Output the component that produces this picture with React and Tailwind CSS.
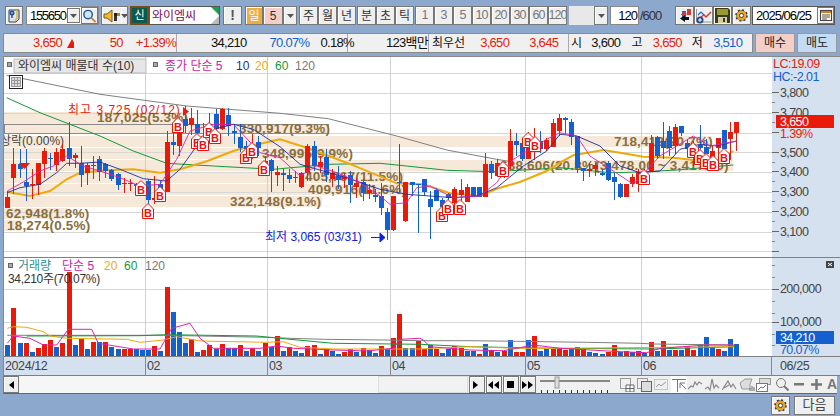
const RED = "#ea1a0a";
const BLUE = "#1560cf";
const BROWN = "#8a6e3c";

const barX = (i) => Math.round(7.3 + i * 6.126);

// [colour, high, bodyTop, bodyBottom, low], y values as read from 3x crops
const CANDLES = [
  ["r",405,423,455,455],["r",276,323,366,415],["b",280,323,340,366],["b",280,378,390,435],["r",340,384,388,430],
  ["r",320,321,387,415],["r",276,285,323,365],["b",290,306,310,340],["r",275,288,327,345],["r",265,279,315,320],
  ["b",198,276,308,330],["r",290,297,306,335],["b",270,322,357,392],["r",320,328,351,385],["b",300,326,330,370],
  ["b",300,310,347,375],["b",320,324,345,365],["b",340,342,370,375],["b",350,354,387,402],["r",365,381,385,410],
  ["r",368,381,385,405],["b",380,384,390,400],["b",380,384,390,400],["b",370,375,432,445],["r",360,427,431,445],
  ["b",375,385,420,425],["r",225,258,408,408],["b",205,258,266,298],["r",200,231,270,300],["b",150,190,210,230],
  ["r",155,186,206,235],["b",162,204,231,260],["r",200,240,270,285],["r",170,205,240,245],["b",160,174,218,240],
  ["r",155,158,220,222],["b",155,177,211,240],["b",205,225,232,265],["b",205,243,276,290],["b",255,270,280,300],
  ["r",235,270,300,310],["b",240,258,276,300],["r",300,315,345,350],["b",310,312,345,410],["r",330,348,358,390],
  ["b",340,352,358,405],["b",340,357,369,382],["r",345,362,367,380],["r",348,350,393,395],["r",265,270,350,375],
  ["b",255,270,330,345],["r",300,318,333,352],["b",280,303,357,380],["r",340,350,368,395],["b",330,360,372,400],
  ["r",350,362,370,395],["b",345,358,387,440],["r",365,380,393,425],["b",370,377,410,435],["r",385,403,412,430],
  ["b",400,418,424,440],["b",380,420,456,475],["b",455,468,521,550],["r",420,420,521,525],["b",265,378,382,410],
  ["r",378,378,495,497],["b",378,378,386,420],["b",385,383,388,532],["b",370,369,408,420],["b",405,429,453,548],
  ["b",395,403,434,435],["b",425,432,452,455],["b",410,415,425,430],["r",392,400,440,445],["r",370,402,417,445],
  ["r",385,393,437,440],["b",393,393,422,424],["b",393,393,422,424],["r",292,324,422,424],["b",315,324,350,370],
  ["r",310,322,360,365],["b",335,345,360,365],["r",220,255,330,340],["b",230,255,266,300],["b",250,262,308,315],
  ["r",228,240,308,310],["r",215,260,280,310],["b",225,255,280,290],["r",245,252,280,285],["r",190,202,273,275],
  ["r",175,187,226,240],["b",183,187,192,235],["b",188,198,243,265],["b",240,240,335,350],["b",335,335,345,375],
  ["r",320,340,345,362],["r",320,327,340,360],["b",340,350,356,362],["b",315,322,372,375],["b",350,363,378,430],
  ["b",380,384,422,424],["r",384,384,422,424],["r",355,363,384,395],["r",340,348,383,410],["b",340,350,375,385],
  ["r",238,260,345,350],["b",240,242,300,310],["b",198,255,275,310],["b",210,225,275,300],["r",205,213,270,295],
  ["b",210,210,230,240],["b",250,262,280,300],["r",255,265,300,330],["b",207,268,275,300],["b",250,272,295,320],
  ["r",270,285,310,330],["r",245,245,277,330],["b",222,222,280,300],["r",197,228,248,310],["r",197,198,230,285],
];

const VOL_Y = [285,174,279,279,306,294,282,270,291,279,65,285,267,297,276,276,276,291,297,297,297,297,300,300,288,303,111,186,246,279,267,306,300,285,297,282,294,294,285,303,294,303,279,291,258,303,291,303,309,288,285,312,297,303,312,306,297,306,294,300,309,288,297,264,192,294,294,273,297,285,297,309,297,288,294,303,303,312,282,300,306,303,270,306,306,270,258,303,297,297,294,300,297,291,297,306,309,312,306,285,306,303,306,303,309,276,303,273,300,300,300,288,300,282,261,291,297,303,267,282];
const VOL_C = "brbrbrrrbrrbrbrbrbbrrbbbrbrbbbrbrrbrbbrbrbrbrbrbbrrbrbbrrbrbbrbrrbbrrbrbbrrbbrbrbrbrrbrbbrrrbrrbbbrrbrbrbrbrbrbrrbbbrb".padEnd(120, "b");

const pts = (arr, ox, oy) => arr.map(([x, y]) => `${(ox + x / 3).toFixed(1)},${(oy + y / 3).toFixed(1)}`).join(" ");
const join = (...parts) => parts.join(" ");

const MA = {
  grey: join(pts([[20,58],[300,115],[560,150],[840,172]], 0, 56), pts([[145,188],[350,240],[500,282],[650,310],[700,318]], 280, 56)),
  green: join(pts([[20,125],[120,170],[300,240],[400,285],[500,322],[640,330],[820,340]], 0, 56), pts([[150,325],[300,322],[380,330],[500,343],[640,347],[800,338]], 280, 56), pts([[0,335],[150,350],[240,348],[350,342],[520,327]], 560, 56)),
  orange: join(pts([[22,408],[90,420],[150,405],[200,370],[240,350],[320,343],[400,340],[480,350],[540,340],[620,316],[700,285],[760,268],[840,250]], 0, 56), pts([[80,275],[200,320],[350,382],[430,385],[510,412],[600,420],[660,395],[720,378],[800,345],[840,320]], 280, 56), pts([[40,298],[130,282],[180,290],[250,302],[340,305],[400,312],[470,315],[520,285]], 560, 56)),
  navy: join(pts([[22,410],[60,395],[120,385],[170,350],[200,322],[240,322],[300,318],[360,340],[430,368],[500,375],[540,340],[590,270],[640,220],[700,205],[760,220],[840,272]], 0, 56), pts([[60,325],[130,345],[200,365],[300,400],[380,415],[450,420],[520,425],[590,420],[650,395],[730,330],[800,285],[840,235]], 280, 56), pts([[50,240],[120,270],[180,330],[240,350],[300,345],[360,280],[420,265],[470,270],[530,255]], 560, 56)),
  pink: join(pts([[22,405],[70,378],[120,345],[160,330],[200,300],[250,330],[300,345],[360,365],[420,390],[480,385],[530,310],[570,225],[640,205],[700,205],[780,290],[840,305]], 0, 56), pts([[60,360],[110,330],[170,350],[240,380],[300,420],[330,445],[380,440],[410,395],[450,390],[520,425],[600,420],[650,380],[700,310],[800,250],[840,230]], 280, 56), pts([[50,240],[90,300],[160,345],[220,385],[300,300],[400,240],[450,270],[530,255]], 560, 56)),
};

const VOL_MA = {
  grey: join(pts([[22,256],[490,256],[800,262],[870,265],[970,268],[1150,270],[1260,272]], 0, 250), pts([[150,272],[290,274],[500,277],[660,280],[700,282],[940,285]], 420, 250)),
  green: join(pts([[80,258],[420,257],[500,254],[770,258],[870,268],[1000,280],[1260,283]], 0, 250), pts([[150,290],[400,295],[700,297],[945,290]], 420, 250)),
  orange: join(pts([[22,235],[40,230],[80,232],[130,245],[150,258],[200,265],[380,268],[420,277],[490,270],[530,260],[600,273],[800,277],[850,275],[900,292],[1000,297],[1260,297]], 0, 250), pts([[150,290],[290,295],[400,295],[940,290]], 420, 250)),
  pink: join(pts([[22,280],[40,258],[90,265],[130,285],[170,285],[205,238],[275,238],[295,280],[400,297],[480,297],[515,235],[570,220],[600,265],[640,295],[780,295],[830,288],[880,295],[1000,300],[1100,303],[1180,295],[1200,268],[1260,265]], 0, 250), pts([[10,270],[30,290],[150,300],[250,302],[290,295],[340,285],[420,295],[600,305],[680,308],[720,295],[860,285],[945,285]], 420, 250)),
};

// volume-at-price rows: top, bottom, right edge
const BANDS = [[112,124,186],[125,134,328],[136,147,712],[148,159,348],[160,171,733],[172,183,404],[184,195,404],[196,207,322],[208,219,67],[220,231,21]];
const GRID_Y = [73,93,113,133,152,172,192,212,232,251];
const GRID_X = [145.5,267.5,390.5,525.5,641.5];

const MARKS = [
  [424,395,0],[445,465,0],[481,415,0],[535,207,0],[592,255,0],[610,262,0],[628,222,0],[646,240,0],[739,300,0],[757,283,0],[793,335,0],
  [487,475,280],[505,452,280],[541,452,280],[669,340,280],[743,252,280],[765,265,280],
  [253,363,560],[400,282,560],[421,303,560],[438,315,560],[458,320,560],[492,300,560],
];

const LABELS = [
  ["187,025(5.3%)",97,122],["330,917(9.3%)",239,133],["718,412(20.7%)",614,146],["348,995(9.9%)",262,158],
  ["688,606(20.8%)",500,170],["(3,478.00 ~ 3,417.00)",595,170],["405,767(11.5%)",305,181],["409,916(11.6%)",308,194],
  ["322,148(9.1%)",230,206],["62,948(1.8%)",6,218],["18,274(0.5%)",7,230],
];

function PriceChart() {
  return (
    <svg viewBox="4 57 768 200" className="block w-[768px] h-[200px] bg-white">
      {BANDS.map(([t, b, r]) => <rect key={t} x="4" y={t} width={r - 4} height={b - t} fill="#f6e9da" />)}
      {GRID_Y.map((y) => <line key={y} x1="4" x2="772" y1={y + 0.5} y2={y + 0.5} stroke="#d6d6d6" />)}
      {GRID_X.map((x) => <line key={x} x1={x} x2={x} y1="57" y2="257" stroke="#d0d0d0" />)}
      <rect x="4.5" y="124.5" width="324" height="9" fill="none" stroke="#8a8a8a" />
      {LABELS.map(([t, x, y]) => (
        <text key={t} x={x} y={y} fontSize="13.5" fontWeight="700" letterSpacing="0.2" fill={BROWN}>{t}</text>
      ))}
      <text x="0" y="145" fontSize="12" fill="#444">상락(0.00%)</text>
      <polyline points={MA.grey} fill="none" stroke="#808080" />
      <polyline points={MA.green} fill="none" stroke="#12993a" />
      <polyline points={MA.orange} fill="none" stroke="#efa90a" strokeWidth="2" />
      {CANDLES.map(([c, hi, top, bot, lo], i) => {
        const x = barX(i);
        const color = c === "r" ? RED : BLUE;
        const t = Math.round(56 + top / 3);
        const b = Math.round(56 + bot / 3);
        return (
          <g key={i} fill={color} shapeRendering="crispEdges">
            <rect x={x} y={Math.round(56 + hi / 3)} width="1" height={Math.max(1, Math.round((lo - hi) / 3))} />
            <rect x={x - 2} y={t} width="5" height={Math.max(1, b - t)} />
          </g>
        );
      })}
      <polyline points={MA.navy} fill="none" stroke="#1a2f9c" strokeWidth="0.9" />
      <polyline points={MA.pink} fill="none" stroke="#dd22b0" strokeWidth="0.9" />
      {MARKS.map(([x, y, ox]) => {
        const cx = Math.round(ox + x / 3);
        const cy = Math.round(56 + y / 3);
        return (
          <g key={`${cx}-${cy}`}>
            <path d={`M${cx - 5.5} ${cy + 7.5}V${cy - 2}L${cx} ${cy - 7.5}L${cx + 5.5} ${cy - 2}V${cy + 7.5}Z`} fill="#fff" stroke="#ee1010" />
            <text x={cx} y={cy + 5.5} fontSize="11" fontWeight="700" textAnchor="middle" fill="#ee1010">B</text>
          </g>
        );
      })}
      {/* high and low captions */}
      <text x="68" y="114" fontSize="12" letterSpacing="1" fill={RED}>최고 3,725 (02/12)</text>
      <path d="M183 107l6 4.5l-6 4.5z" fill={RED} />
      <path d="M19 163h11l-5.5 6z" fill={RED} />
      <text x="265" y="241" fontSize="12" fill="#1020e0">최저 3,065 (03/31)</text>
      <path d="M371 237.5h10M380 233v9l5-4.5z" stroke="#1020e0" fill="#1020e0" />
      {/* legend */}
      <rect x="7.5" y="62.5" width="4" height="4" fill="#aaa" stroke="#666" />
      <rect x="14" y="59" width="132" height="14" fill="#e6e6e6" stroke="#bbb" />
      <text x="18" y="70" fontSize="12" fill="#333">와이엠씨 매물대 수(10)</text>
      <rect x="153.5" y="62.5" width="4" height="4" fill="#aaa" stroke="#666" />
      <text x="165" y="70" fontSize="12" fill="#d020a8">종가 단순 5</text>
      <text x="236" y="70" fontSize="12" fill="#1a2f9c">10</text>
      <text x="255" y="70" fontSize="12" fill="#efa90a">20</text>
      <text x="275" y="70" fontSize="12" fill="#12993a">60</text>
      <text x="295" y="70" fontSize="12" fill="#777">120</text>
      <g stroke="#222" fill="#ddd" shapeRendering="crispEdges">
        <rect x="9.5" y="75.5" width="13" height="13" fill="#fff" />
        <rect x="11.5" y="77.5" width="9" height="9" stroke="#999" />
        <path d="M14.5 78v8M17.5 78v8M12 80.5h8M12 83.5h8" stroke="#999" />
      </g>
    </svg>
  );
}

function PriceAxis() {
  const ticks = [[3800,92],[3700,112],[3500,152],[3400,171],[3300,191],[3200,211],[3100,231]];
  return (
    <svg viewBox="772 57 68 200" className="block w-[68px] h-[200px]">
      {ticks.map(([v, y]) => (
        <g key={y}>
          <line x1="772" x2="779" y1={y + 0.5} y2={y + 0.5} stroke="#666" />
          <line x1="772" x2="775" y1={y + 10.5} y2={y + 10.5} stroke="#888" />
          <text x="780" y={y + 5} fontSize="12.5" letterSpacing="-0.6" fill="#444">{v.toLocaleString("en-US")}</text>
        </g>
      ))}
      <line x1="772" x2="779" y1="132.5" y2="132.5" stroke="#666" />
      <line x1="772" x2="779" y1="251.5" y2="251.5" stroke="#666" />
      <text x="773" y="68" fontSize="12.5" letterSpacing="-0.5" fill={RED}>LC:19.09</text>
      <text x="773" y="81" fontSize="12.5" letterSpacing="-0.5" fill={BLUE}>HC:-2.01</text>
      <rect x="776" y="115" width="58" height="13" fill={RED} />
      <text x="780" y="126" fontSize="12.5" letterSpacing="-0.6" fill="#fff">3,650</text>
      <text x="780" y="138" fontSize="12.5" letterSpacing="-0.6" fill={RED}>1.39%</text>
    </svg>
  );
}

function VolumeChart() {
  return (
    <svg viewBox="4 258 768 98" className="block w-[768px] h-[98px] bg-white">
      {[289,322].map((y) => <line key={y} x1="4" x2="772" y1={y + 0.5} y2={y + 0.5} stroke="#d6d6d6" />)}
      {GRID_X.map((x) => <line key={x} x1={x} x2={x} y1="258" y2="356" stroke="#d0d0d0" />)}
      <rect x="8.5" y="263.5" width="4" height="4" fill="#aaa" stroke="#666" />
      <text x="18" y="270" fontSize="12" fill="#2a9090">거래량</text>
      <text x="62" y="270" fontSize="12" fill="#d020a8">단순 5</text>
      <text x="104" y="270" fontSize="12" fill="#efa90a">20</text>
      <text x="124" y="270" fontSize="12" fill="#12993a">60</text>
      <text x="145" y="270" fontSize="12" fill="#777">120</text>
      {VOL_Y.map((v, i) => {
        const y = Math.round(250 + v / 3);
        return (
          <rect key={i} x={barX(i) - 2} y={y} width="5" height={356 - y} fill={VOL_C[i] === "r" ? RED : BLUE} shapeRendering="crispEdges" />
        );
      })}
      <polyline points={VOL_MA.grey} fill="none" stroke="#808080" />
      <polyline points={VOL_MA.green} fill="none" stroke="#12993a" />
      <polyline points={VOL_MA.orange} fill="none" stroke="#efa90a" />
      <polyline points={VOL_MA.pink} fill="none" stroke="#dd22b0" />
      <text x="8" y="283" fontSize="12" letterSpacing="-0.3" fill="#333">34,210주(70.07%)</text>
    </svg>
  );
}

function VolumeAxis() {
  return (
    <svg viewBox="772 258 68 98" className="block w-[68px] h-[98px]">
      {[265,277,301,313,334,345].map((y) => <line key={y} x1="772" x2="775" y1={y + 0.5} y2={y + 0.5} stroke="#888" />)}
      {[289,322].map((y) => <line key={y} x1="772" x2="779" y1={y + 0.5} y2={y + 0.5} stroke="#666" />)}
      <text x="780" y="293" fontSize="12.5" letterSpacing="-0.6" fill="#444">200,000</text>
      <text x="780" y="326" fontSize="12.5" letterSpacing="-0.6" fill="#444">100,000</text>
      <rect x="776" y="331" width="58" height="13" fill={BLUE} />
      <text x="780" y="342" fontSize="12.5" letterSpacing="-0.6" fill="#fff">34,210</text>
      <text x="780" y="354" fontSize="12.5" letterSpacing="-0.6" fill={BLUE}>70.07%</text>
      <rect x="826" y="261" width="8" height="7" fill="#444" />
      <path d="M828 263l4 3M832 263l-4 3" stroke="#fff" />
    </svg>
  );
}

function DateAxis() {
  const dates = [["2024/12",5],["02",147],["03",269],["04",392],["05",527],["06",643],["06/25",780]];
  return (
    <svg viewBox="4 357 836 18" className="block w-[836px] h-[18px]">
      {[145.5,267.5,390.5,525.5,641.5,771.5].map((x) => <line key={x} x1={x} x2={x} y1="357" y2="375" stroke="#888" />)}
      {dates.map(([t, x]) => (
        <text key={t} x={x} y="370" fontSize="12.5" letterSpacing="-0.4" fill="#444">{t}</text>
      ))}
    </svg>
  );
}

function Btn({ className = "", children }) {
  return (
    <div className={`h-[19px] flex items-center justify-center border border-[#777] shadow-[inset_1px_1px_0_#fff] bg-[#efefef] shrink-0 ${className}`}>
      {children}
    </div>
  );
}

function DropBtn({ className = "" }) {
  return (
    <Btn className={className}>
      <svg width="7" height="4"><path d="M0 0h7L3.5 4z" fill="#555" /></svg>
    </Btn>
  );
}

function NoteIcon() {
  return (
    <svg width="16" height="16" viewBox="0 0 16 16">
      <path d="M3 2h10v9l-3 3H3z" fill="#dfe6ef" stroke="#23456e" />
      <path d="M11 2v8l-2 3" fill="none" stroke="#e6b23a" strokeWidth="1.5" />
      <circle cx="6" cy="5" r="2.5" fill="#234f86" />
      <circle cx="6" cy="5" r="0.8" fill="#fff" />
      <path d="M6 7v3" stroke="#234f86" strokeWidth="1.5" />
    </svg>
  );
}

function SearchIcon() {
  return (
    <svg width="16" height="16" viewBox="0 0 16 16">
      <circle cx="6.5" cy="6.5" r="4.5" fill="#cfe6fa" stroke="#26558f" strokeWidth="1.5" />
      <path d="M10 10l4.5 4.5" stroke="#c08a30" strokeWidth="2" />
    </svg>
  );
}

function SpeakerIcon() {
  return (
    <svg width="17" height="14" viewBox="0 0 17 14">
      <path d="M1 5h3l5-4v12L4 9H1z" fill="#f4b92e" stroke="#7a5a10" />
      <rect x="11" y="4" width="3" height="3" fill="#222" />
      <rect x="14" y="4" width="3" height="3" fill="#b8860b" />
      <rect x="11" y="7" width="3" height="5" fill="#333" />
    </svg>
  );
}

function GearIcon() {
  return (
    <svg width="15" height="15" viewBox="0 0 16 16">
      <circle cx="8" cy="8" r="5" fill="#f0a51e" stroke="#333" />
      <circle cx="8" cy="8" r="5.5" fill="none" stroke="#333" strokeWidth="2.4" strokeDasharray="2 2.3" />
      <circle cx="8" cy="8" r="4.5" fill="none" stroke="#f0a51e" strokeWidth="1.4" />
      <circle cx="8" cy="8" r="2.2" fill="#fff" stroke="#333" />
    </svg>
  );
}

function FlowIcon() {
  return (
    <svg width="16" height="15" viewBox="0 0 16 15">
      <rect x="5" y="3" width="4" height="6" fill="#2b63c6" />
      <rect x="10" y="1" width="4" height="6" fill="#d83a34" />
      <path d="M4 6h2v-3l4 3l-4 3v-2H4z" fill="#d83a34" />
      <path d="M12 9H8V7L3 10.5L8 14v-2h4z" fill="#111" />
    </svg>
  );
}

function ChartAddIcon() {
  return (
    <svg width="17" height="16" viewBox="0 0 17 16">
      <path d="M1.5 1v13h15" fill="none" stroke="#999" />
      <path d="M3 7l3-3l3 3" fill="none" stroke="#2b63c6" strokeWidth="1.2" />
      <path d="M6 9l3-2l2 2l5-5" fill="none" stroke="#d83a34" strokeWidth="1.5" />
      <circle cx="5" cy="12" r="3.5" fill="#234a86" />
      <path d="M3 12h4M5 10v4" stroke="#fff" />
    </svg>
  );
}

function FloppyIcon() {
  return (
    <svg width="15" height="15" viewBox="0 0 15 15">
      <path d="M0 0h13l2 2v13H0z" fill="#3a3a1c" />
      <rect x="2" y="1" width="11" height="6" fill="#9a9a2c" />
      <rect x="3" y="9" width="9" height="6" fill="#cfcfa0" />
      <rect x="8" y="10" width="2" height="4" fill="#333" />
    </svg>
  );
}

function CalendarIcon() {
  return (
    <svg width="12" height="11" viewBox="0 0 12 11">
      <rect x="0.5" y="0.5" width="11" height="10" fill="#fff6dc" stroke="#444" />
      <rect x="1" y="1" width="10" height="2" fill="#d97a1e" />
      <path d="M2 5h8M2 7h8M2 9h5" stroke="#555" />
    </svg>
  );
}

function Toolbar() {
  const boxed = "h-[19px] flex items-center justify-center border border-[#777] shadow-[inset_1px_1px_0_#fff] bg-[#efefef] shrink-0 text-[12px] text-[#333]";
  return (
    <div className="h-[33px] pb-[2px] shrink-0 flex items-center pl-[5px]">
      <Btn className="w-[18px] mr-[3px]"><NoteIcon /></Btn>
      <div className="w-[73px] h-[19px] mr-[2px] flex items-center bg-white border border-[#888]">
        <span className="w-[41px] pl-[3px] text-[13px] tracking-[-1.3px] text-black">155650</span>
        <DropBtn className="w-[13px] h-[15px]!" />
        <Btn className="w-[17px] h-[17px]! ml-[1px]"><SearchIcon /></Btn>
      </div>
      <div className="w-[27px] h-[19px] mr-[2px] flex shrink-0">
        <Btn className="w-[20px] border-r-0"><SpeakerIcon /></Btn>
        <DropBtn className="w-[7px] border-l-0" />
      </div>
      <div className="w-[19px] h-[19px] flex items-center justify-center shrink-0 bg-[#0b5a50] border-2 border-[#7a4a18] text-[11px] text-white">신</div>
      <div className="w-[71px] h-[19px] mr-[3px] relative flex items-center pl-[2px] bg-white border border-[#555] text-[12px] text-[#7a0f5a]">
        와이엠씨
        <svg className="absolute right-0 top-0" width="8" height="17"><path d="M0 0h8v8z" fill="#1ca050" /><path d="M8 9v8H0z" fill="#bbb" /></svg>
      </div>
      <Btn className="w-[19px] mr-[3px] text-[14px] font-bold text-[#555]">!</Btn>
      <div className={`${boxed} w-[18px] bg-[#f2ab3e]! text-white!`}>일</div>
      <div className={`${boxed} w-[20px] bg-[#f3cfc8]!`}>5</div>
      <DropBtn className="w-[14px] mr-[2px]" />
      {["주", "월", "년"].map((t) => <div key={t} className={`${boxed} w-[19px]`}>{t}</div>)}
      <div className="w-[1px] shrink-0" />
      {["분", "초", "틱"].map((t) => <div key={t} className={`${boxed} w-[19px]`}>{t}</div>)}
      <div className="w-[1px] shrink-0" />
      {["1", "3", "5", "10", "20", "30", "60", "120"].map((t) => (
        <div key={t} className={`${boxed} w-[19px] text-[#777]! tracking-[-1px] text-[12.5px]!`}>{t}</div>
      ))}
      <div className="w-[2px] shrink-0" />
      <div className="w-[39px] h-[19px] mr-[2px] flex shrink-0 bg-[#e8e8e8]">
        <div className="flex-1" />
        <DropBtn className="w-[14px]" />
      </div>
      <div className="w-[29px] h-[19px] flex items-center justify-end pr-[1px] bg-white border border-[#888] text-[13px] tracking-[-1px] text-black shrink-0">120</div>
      <span className="w-[36px] pl-[1px] text-[13px] tracking-[-1px] text-[#333] shrink-0">/600</span>
      <Btn className="w-[19px]"><FlowIcon /></Btn>
      <Btn className="w-[19px]"><ChartAddIcon /></Btn>
      <Btn className="w-[19px]"><FloppyIcon /></Btn>
      <Btn className="w-[19px] mr-[1px]"><GearIcon /></Btn>
      <div className="w-[83px] h-[19px] flex items-center bg-white border border-[#555] shrink-0">
        <span className="flex-1 pl-[3px] text-[13px] tracking-[-1px] text-black">2025/06/25</span>
        <Btn className="w-[17px] h-[17px]!"><CalendarIcon /></Btn>
      </div>
    </div>
  );
}

function Cell({ className = "", children }) {
  return <div className={`h-full flex items-center shrink-0 border-r border-[#aaa] tracking-[-0.7px] ${className}`}>{children}</div>;
}

function InfoBar() {
  return (
    <div className="h-[20px] shrink-0 flex text-[13px] pl-[3px]">
      <div className="w-[750px] h-full flex bg-[#f0f0f0] border border-[#8a8a8a]">
        <Cell className="w-[173px] text-[#ea1a0a]">
          <span className="ml-[29px]">3,650</span>
          <svg className="ml-[5px]" width="10" height="9"><path d="M5 0l5 9H0z" fill="#ea1a0a" /></svg>
          <span className="ml-[36px]">50</span>
          <span className="ml-[13px]">+1.39%</span>
        </Cell>
        <Cell className="w-[171px] text-[#111]">
          <span className="ml-[34px]">34,210</span>
          <span className="ml-[23px] text-[#1560cf]">70.07%</span>
          <span className="ml-[11px]">0.18%</span>
        </Cell>
        <Cell className="w-[81px] text-[#111] justify-end">123백만</Cell>
        <Cell className="w-[140px] text-[#ea1a0a]">
          <span className="ml-[3px] text-[#111] tracking-normal text-[12px]">최우선</span>
          <span className="ml-[15px]">3,650</span>
          <span className="ml-[20px]">3,645</span>
        </Cell>
        <div className="flex-1 flex items-center tracking-[-0.7px] text-[#111]">
          <span className="ml-[2px] text-[12px]">시</span>
          <span className="ml-[10px]">3,600</span>
          <span className="ml-[11px] text-[12px]">고</span>
          <span className="ml-[11px] text-[#ea1a0a]">3,650</span>
          <span className="ml-[10px] text-[12px]">저</span>
          <span className="ml-[11px] text-[#1560cf]">3,510</span>
        </div>
      </div>
      <div className="w-[40px] h-full ml-[2px] flex items-center justify-center bg-[#f3cfc8] border border-[#999] text-[12px] text-[#222]">매수</div>
      <div className="w-[40px] h-full ml-[2px] flex items-center justify-center bg-[#c4dcf3] border border-[#999] text-[12px] text-[#222]">매도</div>
    </div>
  );
}

function ToolIcons() {
  const c = "#999";
  return (
    <div className="flex items-center h-full ml-[3px]">
      <svg width="16" height="15" className="mr-[1px]"><rect x="1.5" y="1.5" width="10" height="10" fill="none" stroke={c} /><path d="M7 8h8v7H7zM11 8v7M7 11.5h8" fill="#fff" stroke="#666" /></svg>
      <svg width="16" height="15" className="mr-[1px]"><rect x="1.5" y="1.5" width="10" height="10" fill="none" stroke={c} /><rect x="5.5" y="4.5" width="10" height="10" fill="#ddd" stroke="#666" /></svg>
      <svg width="16" height="15" className="mr-[2px]"><rect x="1.5" y="2.5" width="13" height="10" fill="none" stroke={c} strokeDasharray="1 1" /><path d="M3 10l3-3l2 2l5-4" fill="none" stroke={c} /></svg>
      <div className="w-[16px] h-[17px] bg-white flex items-center justify-center mr-[1px]">
        <svg width="14" height="14"><path d="M0 1.5h14M5.5 2v12M8 5h5M8 5v5M8 5l6 6" fill="none" stroke="#777" /></svg>
      </div>
      {[
        "M0 12l3-3l2 1l2-5l2 3l2-3l3 2",
        "M0 12l3-2l2 3l2-11l2 9l2-3l3 3",
        "M0 13l6-9l3 6l2-3l3 5M2 11l5-3",
      ].map((d) => (
        <svg key={d} width="15" height="15" className="mr-[2px]"><path d={d} fill="none" stroke="#888" strokeWidth="1.2" /></svg>
      ))}
      <svg width="16" height="15" className="mr-[1px]"><path d="M1 6l5-4h7l-2 5v5H3z" fill="#ddd" stroke={c} /><path d="M11 14v-3M13 14v-5M15 14v-4" stroke="#666" /></svg>
      <svg width="15" height="15" className="mr-[4px]"><rect x="3.5" y="1.5" width="11" height="6" fill="#ddd" stroke={c} /><rect x="0.5" y="6.5" width="11" height="8" fill="#fff" stroke="#777" /><path d="M2 13l3-3l2 1l3-3" fill="none" stroke="#777" /></svg>
      <svg width="14" height="15" className="mr-[5px]"><circle cx="6" cy="6" r="4.5" fill="none" stroke="#777" /><path d="M9 9l4.5 4.5" stroke="#777" strokeWidth="2" /></svg>
      <svg width="10" height="15" className="mr-[7px]"><rect x="0" y="6" width="10" height="2.5" fill="#777" /></svg>
      <svg width="11" height="15" className="mr-[5px]"><path d="M0 7.5h11M5.5 2v11" stroke="#777" strokeWidth="2.5" /></svg>
      <span className="text-[14px] font-bold text-[#777]">A</span>
    </div>
  );
}

function ScrollRow() {
  return (
    <div className="h-[18px] shrink-0 ml-[3px] mr-[3px] flex items-center bg-[#f0f0f0] border-b border-[#666]">
      <Btn className="w-[16px] h-[17px]!">
        <svg width="5" height="8"><path d="M5 0v8L0 4z" fill="#000" /></svg>
      </Btn>
      <div className="w-[359px] h-[17px] bg-[#f6f6f6]" />
      <div className="w-[90px] h-[17px] bg-[#f2f2f2] border border-[#ddd]" />
      {[
        <path key="p" d="M2 1v8l5-4z" />,
        <path key="r" d="M5 1v8L0 5zM11 1v8L6 5z" />,
        <rect key="s" x="2" y="1" width="7" height="7" />,
        <path key="f" d="M0 1v8l5-4zM6 1v8l5-4z" />,
      ].map((icon, i) => (
        <Btn key={i} className="w-[16px] h-[17px]! ml-[1px]">
          <svg width="11" height="10" fill="#000">{icon}</svg>
        </Btn>
      ))}
      <svg width="78" height="17" className="ml-[2px] shrink-0">
        <rect x="2" y="4" width="70" height="2" fill="#888" />
        <rect x="17" y="1" width="4" height="11" fill="#ddd" stroke="#999" />
        {[3,9,15,21,27,33,39,45,51,57,63,69].map((x) => <rect key={x} x={x} y="14" width="1" height="3" fill="#333" />)}
      </svg>
      <ToolIcons />
    </div>
  );
}

export default function App() {
  return (
    <div className="w-[840px] h-[416px] flex flex-col overflow-hidden bg-[#8ca8cc] font-['Liberation_Sans','Noto_Sans_CJK_KR',sans-serif]">
      <Toolbar />
      <InfoBar />
      <div className="h-[3px] shrink-0" />

      <div className="ml-[3px] shrink-0 border-t border-l border-[#888]">
        <div className="flex border-b border-[#808080]">
          <PriceChart />
          <div className="bg-[#d6e1ef]"><PriceAxis /></div>
        </div>
        <div className="flex">
          <VolumeChart />
          <div className="bg-[#d6e1ef]"><VolumeAxis /></div>
        </div>
        <div className="bg-[#d6e1ef] border-t border-b border-[#808080]">
          <DateAxis />
        </div>
      </div>

      <ScrollRow />

      <div className="flex-1 flex items-center justify-end pr-[5px]">
        <Btn className="w-[19px] mr-[4px]"><GearIcon /></Btn>
        <Btn className="w-[41px] text-[13px] text-[#444]">다음</Btn>
      </div>
    </div>
  );
}
